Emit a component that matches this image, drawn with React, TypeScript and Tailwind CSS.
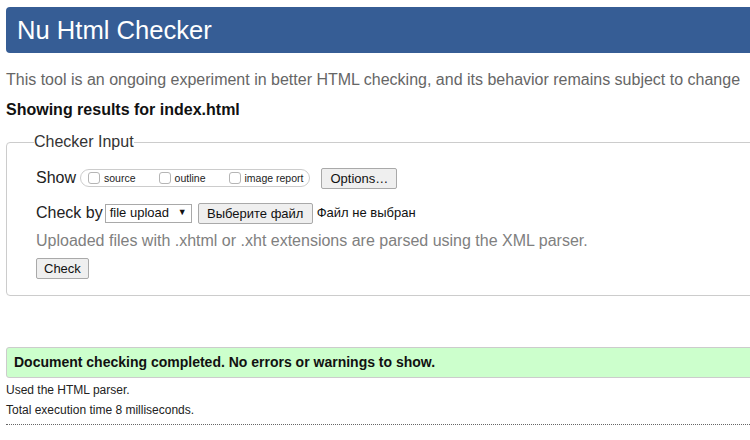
import React from "react";

function Box({ label }: { label: string }) {
  return (
    <span className="flex items-center">
      <span className="w-[12px] h-[12px] border border-[#b5b5b5] rounded-[3px] bg-white" />
      <span className="ml-[4px] mt-[2px] text-[10.5px] text-[#222]">{label}</span>
    </span>
  );
}

export default function App() {
  return (
    <div
      className="w-[750px] h-[440px] overflow-hidden bg-white text-[#222]"
      style={{ fontFamily: '"Liberation Sans", Arial, sans-serif' }}
    >
      <div className="ml-[6px] w-[800px]">
        <div className="mt-[7px] h-[46px] flex items-center pl-[11px] rounded-[4px] bg-[#365d95] text-white text-[25.6px]">
          Nu Html Checker
        </div>
        <div className="mt-[17px] leading-[20px] text-[16px] text-[#666]">
          This tool is an ongoing experiment in better HTML checking, and its behavior remains subject to change
        </div>
        <div className="mt-[10px] leading-[20px] text-[16px] font-bold text-[#111]">
          Showing results for index.html
        </div>
        <fieldset className="mt-[12px] border border-[#ccc] rounded-[4px] pl-[29px] pb-[16px] pt-0 m-0">
          <legend className="ml-[-2px] px-0 text-[16px] leading-[20px] text-[#333]">Checker Input</legend>
          <div className="mt-[15px] h-[22px] flex items-center text-[16px] text-[#222]">
            <span>Show</span>
            <span className="ml-[4px] h-[18px] flex items-center gap-[23px] border border-[#ccc] rounded-full pl-[7px] pr-[6px]">
              <Box label="source" />
              <Box label="outline" />
              <Box label="image report" />
            </span>
            <button className="ml-[11px] h-[21px] px-[8px] text-[13px] border border-[#a9a9a9] rounded-[2px] bg-[#efefef] text-[#111]">
              Options…
            </button>
          </div>
          <div className="mt-[13px] h-[22px] flex items-center text-[16px] text-[#222]">
            <span>Check by</span>
            <span className="ml-[2px] h-[19px] w-[87px] flex items-center justify-between border border-[#a9a9a9] bg-white pl-[4px] pr-[4px] text-[13px] text-[#111]">
              <span>file upload</span>
              <span className="text-[9px]">▼</span>
            </span>
            <button className="ml-[6px] h-[21px] w-[115px] text-[13px] border border-[#a9a9a9] rounded-[2px] bg-[#efefef] text-[#111]">
              Выберите файл
            </button>
            <span className="ml-[4px] text-[13px] text-[#111]">Файл не выбран</span>
          </div>
          <div className="mt-[7px] leading-[20px] text-[16px] text-[#808080]">
            Uploaded files with .xhtml or .xht extensions are parsed using the XML parser.
          </div>
          <button className="mt-[7px] h-[21px] px-[7px] text-[13px] border border-[#a9a9a9] rounded-[2px] bg-[#efefef] text-[#111] block">
            Check
          </button>
        </fieldset>
        <div className="mt-[51px] h-[31px] flex items-center pl-[7px] border border-[#ccc] rounded-[3px] bg-[#ccffcc] text-[14px] font-bold text-[#111]">
          Document checking completed. No errors or warnings to show.
        </div>
        <div className="leading-[20px] text-[12px] text-[#222] mt-[2px]">Used the HTML parser.</div>
        <div className="leading-[20px] text-[12px] text-[#222]">Total execution time 8 milliseconds.</div>
        <div className="mt-[4px] border-t border-dotted border-[#666]" />
      </div>
    </div>
  );
}
